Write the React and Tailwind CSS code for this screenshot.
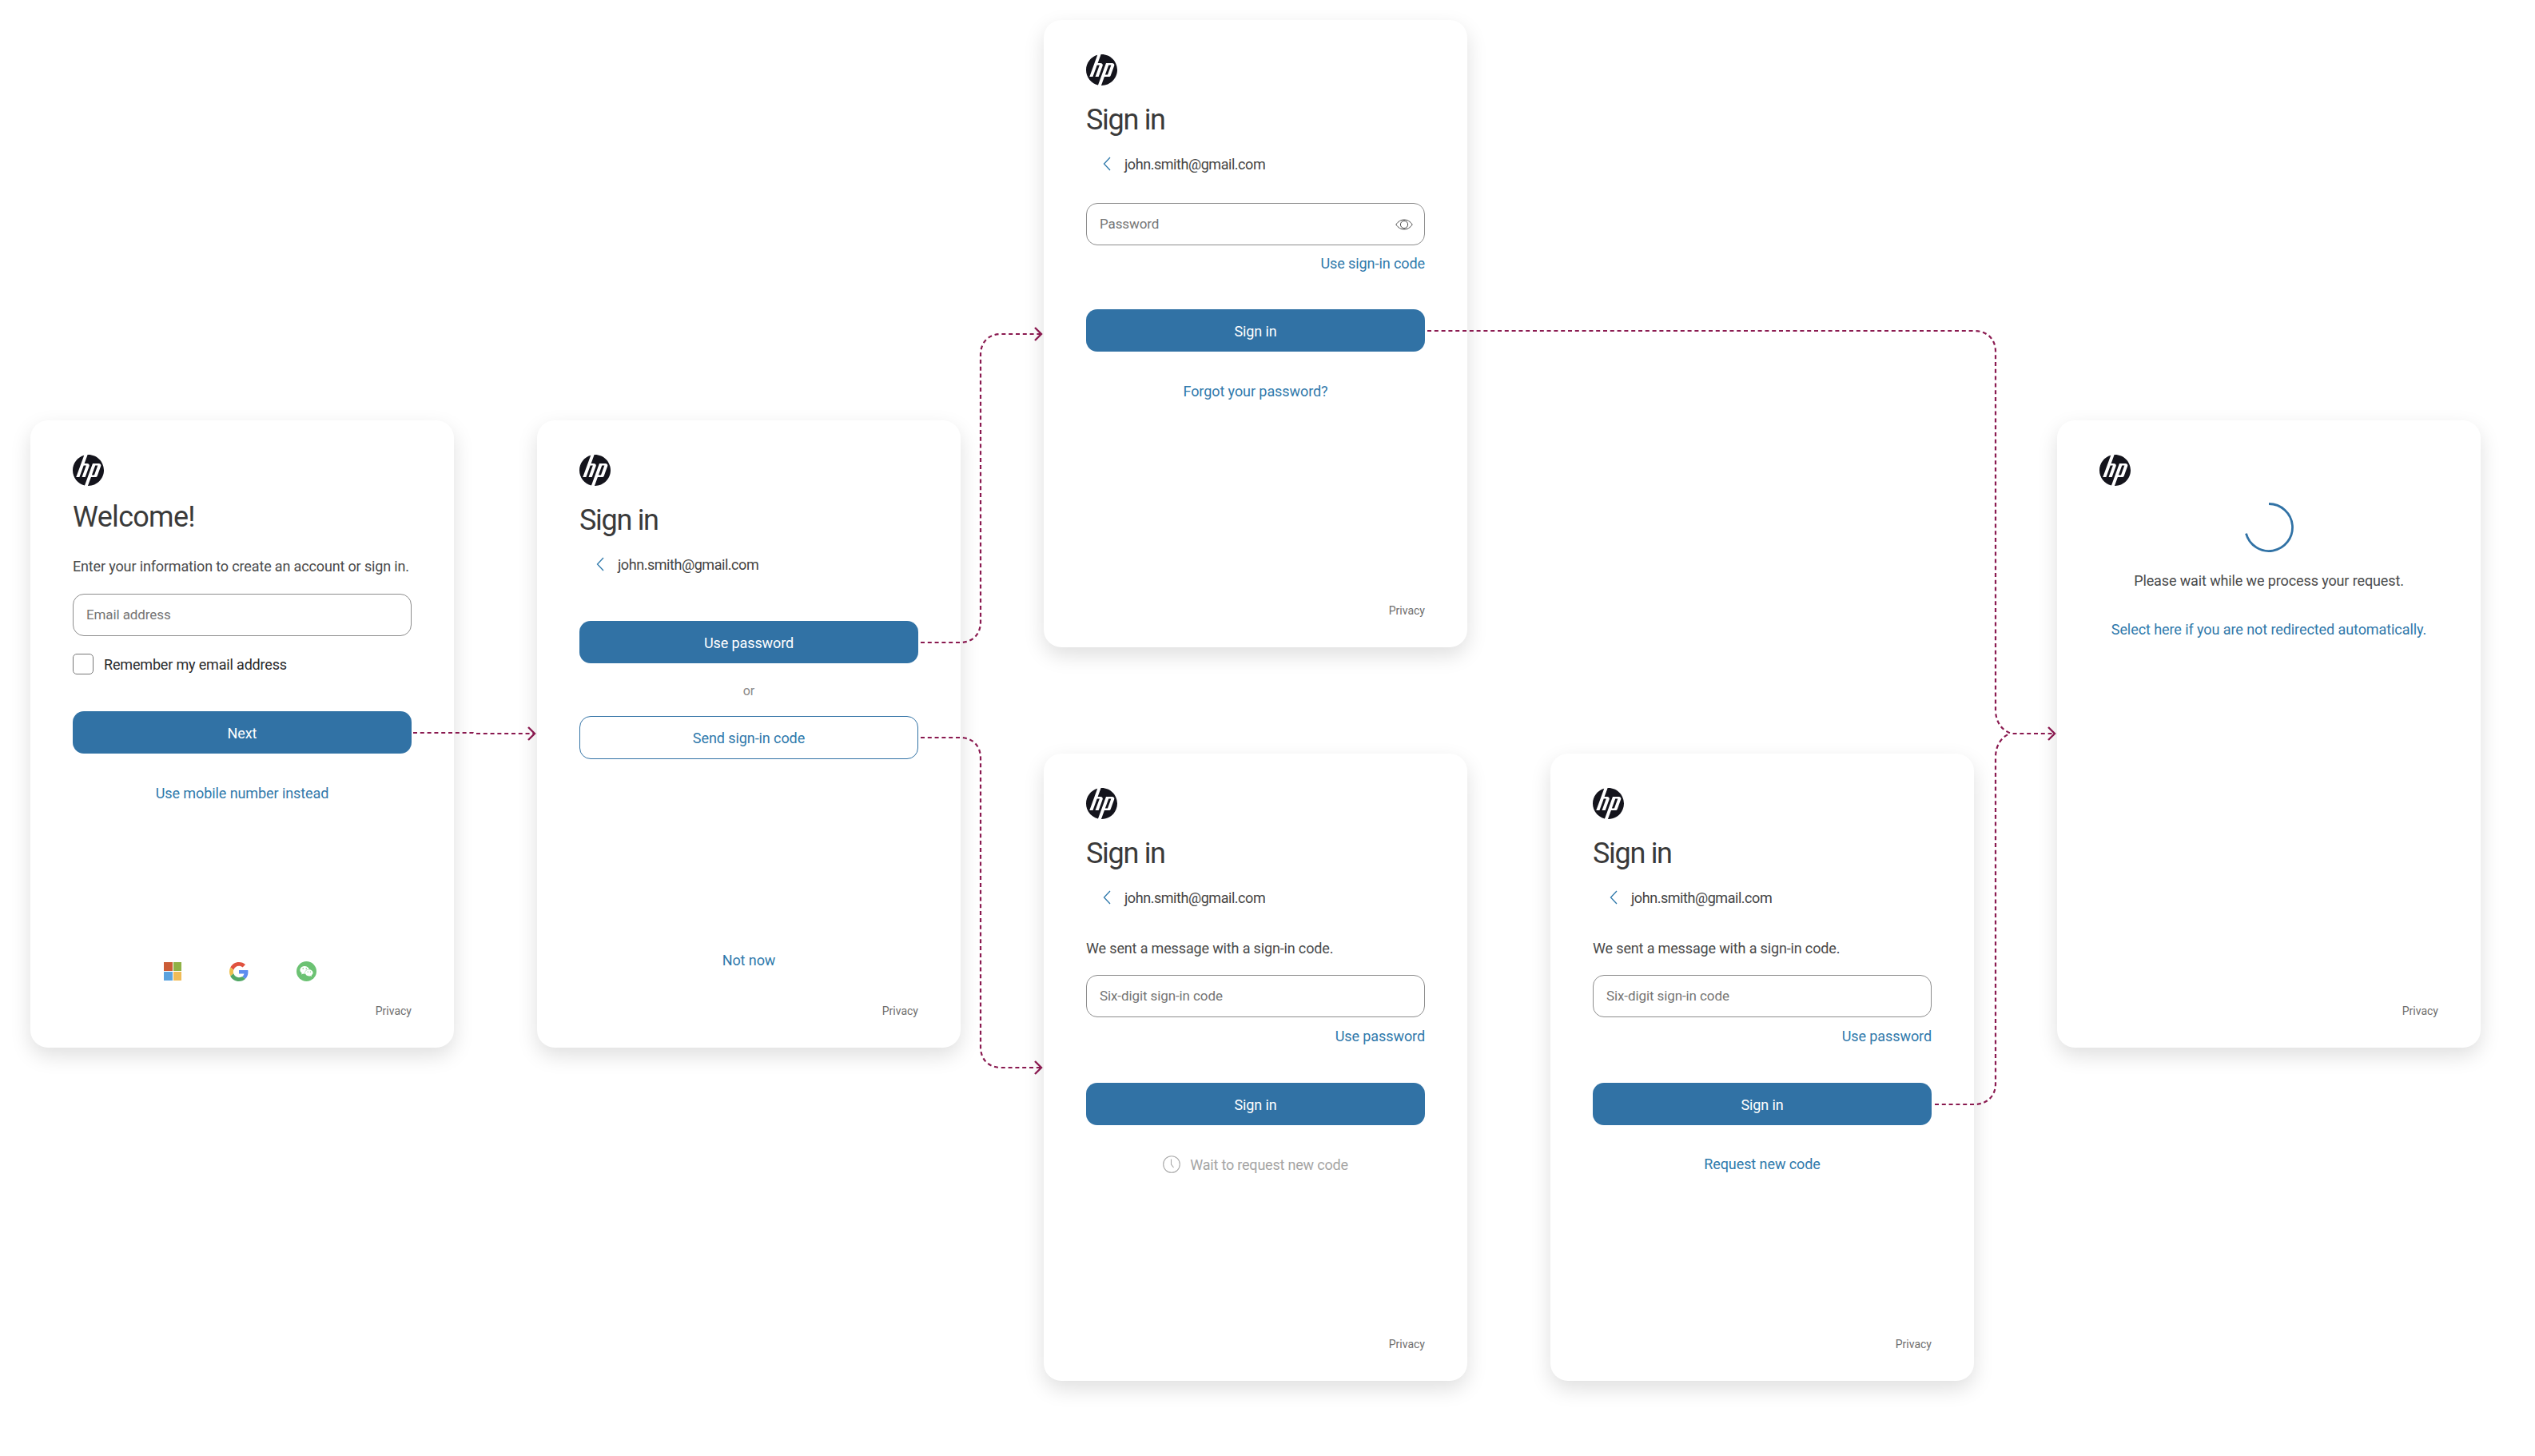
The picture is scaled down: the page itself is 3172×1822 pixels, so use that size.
import { SiHp } from 'react-icons/si';
import { FaWeixin } from 'react-icons/fa';

const Logo = () => <SiHp className="w-[39px] h-[39px] text-[#14141c] shrink-0" />;

const Title = ({ children, className = 'mt-[21px] mb-[-1px] tracking-[-1.3px]' }) => (
  <h1 className={`text-[36px] leading-[44px] font-normal text-[#3a3a3a] ${className}`}>{children}</h1>
);

const BackRow = () => (
  <div className="mt-[22px] h-[24px] pl-[21px] flex items-center gap-[17px]">
    <svg viewBox="0 0 10 18" className="w-[10px] h-[18px] text-[#2f79ab]" fill="none" stroke="currentColor" strokeWidth="1.3">
      <path d="M9 1 1.5 9 9 17" />
    </svg>
    <span className="text-[18px] tracking-[-0.45px] text-[#444]">john.smith@gmail.com</span>
  </div>
);

const Field = ({ label, className = '', children }) => (
  <div className={`h-[53px] rounded-[14px] border-[1.5px] border-[#8c8c8c] pl-[16px] pr-[14px] flex items-center justify-between ${className}`}>
    <span className="text-[17px] tracking-[-0.1px] text-[#757575]">{label}</span>
    {children}
  </div>
);

const PrimaryButton = ({ children, className = 'mt-[46px]' }) => (
  <button className={`h-[53px] w-full pt-[2px] rounded-[14px] bg-[#3172a5] text-white text-[18px] tracking-[-0.1px] ${className}`}>{children}</button>
);

const TextLink = ({ children, className = '' }) => (
  <a href="#" className={`block h-[22px] leading-[22px] text-[18px] tracking-[-0.08px] text-[#2f79ab] ${className}`}>{children}</a>
);

const Privacy = ({ className = '' }) => (
  <div className={`self-end h-[20px] leading-[20px] text-[14px] text-[#6e6e6e] ${className}`}>Privacy</div>
);

const Card = ({ children }) => (
  <div className="w-[530px] h-[785px] flex flex-col rounded-[22px] bg-white px-[53px] pt-[43px] pb-[36px] shadow-[0_10px_26px_rgba(0,0,0,0.13)]">
    {children}
  </div>
);

const Eye = () => (
  <svg viewBox="0 0 22 14" className="w-[22px] h-[14px] text-[#4a4a4a]" fill="none" stroke="currentColor" strokeWidth="1">
    <path d="M.8 7C3.5 3 7 1 11 1s7.5 2 10.2 6C18.500 11 15 13 11 13S3.500 11 .8 7Z" />
    <circle cx="11" cy="7" r="4.600" />
  </svg>
);

const Clock = () => (
  <svg viewBox="0 0 22 22" className="w-[22px] h-[22px] text-[#a8a8a8]" fill="none" stroke="currentColor" strokeWidth="1.1">
    <circle cx="11" cy="11" r="10.300" />
    <path d="M10.500 4.500v6.500l3 4" />
  </svg>
);

const GoogleIcon = () => (
  <svg viewBox="0 0 48 48" className="w-[24px] h-[24px]">
    <path fill="#e0523f" d="M24 9.500c3.500 0 6.700 1.200 9.200 3.600l6.900-6.900C35.900 2.400 30.500 0 24 0 14.600 0 6.500 5.400 2.600 13.200l8 6.200C12.400 13.700 17.700 9.500 24 9.500z" />
    <path fill="#5d8df0" d="M46.900 24.500c0-1.600-.1-3.100-.4-4.500H24v9h12.900c-.6 3-2.200 5.500-4.700 7.200l7.700 6c4.500-4.200 7-10.300 7-17.700z" />
    <path fill="#eec04e" d="M10.500 28.600c-.5-1.400-.8-3-.8-4.600s.3-3.200.8-4.600l-8-6.200C.9 16.500 0 20.100 0 24s.9 7.500 2.600 10.800l7.900-6.200z" />
    <path fill="#52a766" d="M24 48c6.500 0 11.900-2.100 15.900-5.800l-7.700-6c-2.200 1.400-4.900 2.300-8.200 2.300-6.300 0-11.600-4.200-13.500-9.900l-8 6.200C6.500 42.600 14.600 48 24 48z" />
  </svg>
);

const MicrosoftIcon = () => (
  <div className="w-[22px] h-[23px] grid grid-cols-2 gap-[1px]">
    <div className="bg-[#cb5c36]" />
    <div className="bg-[#8fb145]" />
    <div className="bg-[#5aa2de]" />
    <div className="bg-[#efbb56]" />
  </div>
);

// the dotted arrows between the screens
const Connectors = () => (
  <svg className="absolute left-0 top-0 w-[3172px] h-[1822px] pointer-events-none" viewBox="0 0 3172 1822" fill="none" stroke="#8a1a50" strokeWidth="2.200">
    <g strokeDasharray="5 3.800">
      <path d="M517 917H592L594 918H668" />
      <path d="M1152 804H1201C1217 804 1227 794 1227 778V444C1227 428 1237 418 1253 418H1302" />
      <path d="M1152 923H1201C1217 923 1227 933 1227 949V1310C1227 1326 1237 1336 1253 1336H1302" />
      <path d="M1786 414H2470C2486 414 2497 424 2497 440V888C2497 904 2505 914 2517 918H2570" />
      <path d="M2421 1382H2470C2486 1382 2497 1372 2497 1356V948C2497 932 2505 922 2515 918" />
    </g>
    <g strokeWidth="2.400">
      <path d="M661 910 669 918 661 926" />
      <path d="M1295 410 1303 418 1295 426" />
      <path d="M1295 1328 1303 1336 1295 1344" />
      <path d="M2563 910 2571 918 2563 926" />
    </g>
  </svg>
);

export default function App() {
  return (
    <div className="relative min-h-screen bg-white font-['Roboto',sans-serif] flex items-start gap-[104px] pl-[38px] overflow-hidden">
      {/* welcome */}
      <div className="pt-[526px]">
        <Card>
          <Logo />
          <Title className="mt-[17px] mb-[-1px] tracking-[-0.7px]">Welcome!</Title>
          <p className="mt-[29px] h-[24px] leading-[24px] text-[18px] tracking-[-0.15px] text-[#4a4a4a]">Enter your information to create an account or sign in.</p>
          <Field label="Email address" className="mt-[22px]" />
          <label className="mt-[22px] h-[26px] flex items-center gap-[13px]">
            <span className="w-[26px] h-[26px] rounded-[5px] border-[1.5px] border-[#777]" />
            <span className="text-[18px] tracking-[-0.17px] text-[#2a2a2a]">Remember my email address</span>
          </label>
          <PrimaryButton>Next</PrimaryButton>
          <TextLink className="mt-[39px] text-center">Use mobile number instead</TextLink>
          <div className="flex-1" />
          <div className="flex items-center gap-[60px] pl-[114px]">
            <MicrosoftIcon />
            <GoogleIcon />
            <div className="w-[25px] h-[25px] rounded-full bg-[#6cc273] flex items-center justify-center">
              <FaWeixin className="w-[17px] h-[17px] text-white" />
            </div>
          </div>
          <Privacy className="mt-[27px]" />
        </Card>
      </div>

      {/* choose method */}
      <div className="pt-[526px]">
        <Card>
          <Logo />
          <Title>Sign in</Title>
          <BackRow />
          <PrimaryButton className="mt-[59px]">Use password</PrimaryButton>
          <div className="mt-[25px] mb-[-1px] h-[20px] leading-[20px] text-center text-[16px] text-[#8a8a8a]">or</div>
          <button className="mt-[22px] h-[54px] w-full pt-[1px] rounded-[14px] border-[1.5px] border-[#3172a5] text-[#2f79ab] text-[18px] tracking-[-0.08px]">Send sign-in code</button>
          <div className="flex-1" />
          <TextLink className="text-center">Not now</TextLink>
          <Privacy className="mt-[42px]" />
        </Card>
      </div>

      {/* password / code */}
      <div className="pt-[25px] flex flex-col gap-[133px]">
        <Card>
          <Logo />
          <Title>Sign in</Title>
          <BackRow />
          <Field label="Password" className="mt-[37px]">
            <Eye />
          </Field>
          <TextLink className="mt-[12px] text-right">Use sign-in code</TextLink>
          <PrimaryButton>Sign in</PrimaryButton>
          <TextLink className="mt-[39px] text-center">Forgot your password?</TextLink>
          <div className="flex-1" />
          <Privacy />
        </Card>
        <Card>
          <Logo />
          <Title>Sign in</Title>
          <BackRow />
          <p className="mt-[40px] h-[24px] leading-[24px] text-[18px] tracking-[-0.15px] text-[#4a4a4a]">We sent a message with a sign-in code.</p>
          <Field label="Six-digit sign-in code" className="mt-[21px]" />
          <TextLink className="mt-[13px] text-right">Use password</TextLink>
          <PrimaryButton className="mt-[47px]">Sign in</PrimaryButton>
          <div className="mt-[38px] h-[22px] flex items-center justify-center gap-[12px] text-[18px] tracking-[-0.2px] text-[#a5a5a5]">
            <Clock />
            <span>Wait to request new code</span>
          </div>
          <div className="flex-1" />
          <Privacy />
        </Card>
      </div>

      {/* code, timer finished */}
      <div className="pt-[943px]">
        <Card>
          <Logo />
          <Title>Sign in</Title>
          <BackRow />
          <p className="mt-[40px] h-[24px] leading-[24px] text-[18px] tracking-[-0.15px] text-[#4a4a4a]">We sent a message with a sign-in code.</p>
          <Field label="Six-digit sign-in code" className="mt-[21px]" />
          <TextLink className="mt-[13px] text-right">Use password</TextLink>
          <PrimaryButton className="mt-[47px]">Sign in</PrimaryButton>
          <TextLink className="mt-[38px] text-center">Request new code</TextLink>
          <div className="flex-1" />
          <Privacy />
        </Card>
      </div>

      {/* redirecting */}
      <div className="pt-[526px]">
        <Card>
          <Logo />
          <svg viewBox="0 0 62 62" className="mt-[21px] w-[62px] h-[62px] self-center text-[#3172a5]" fill="none" stroke="currentColor" strokeWidth="2.800">
            <path d="M31 1.500A29.500 29.500 0 1 1 2.500 38.600" />
          </svg>
          <p className="mt-[24px] h-[24px] leading-[24px] text-center text-[18px] tracking-[-0.12px] text-[#4a4a4a]">Please wait while we process your request.</p>
          <TextLink className="mt-[38px] text-center">Select here if you are not redirected automatically.</TextLink>
          <div className="flex-1" />
          <Privacy />
        </Card>
      </div>

      <Connectors />
    </div>
  );
}
